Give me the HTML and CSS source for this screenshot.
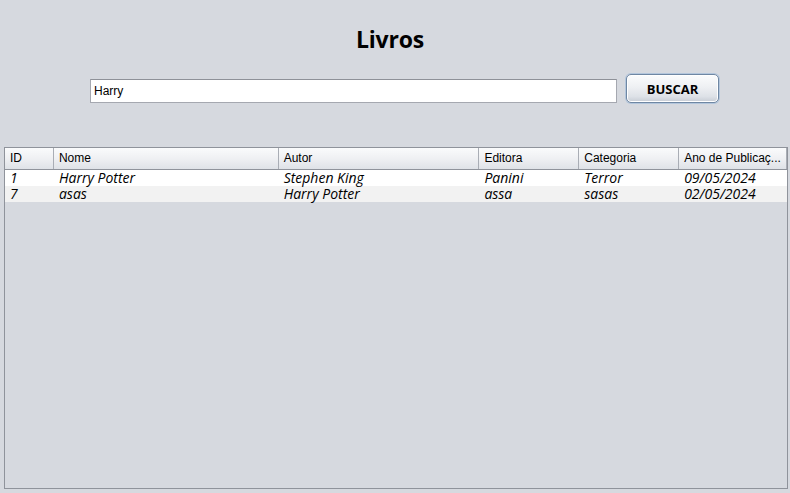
FILE: index.html
```html
<!DOCTYPE html>
<html lang="pt">
<head>
<meta charset="utf-8">
<title>Livros</title>
<link rel="stylesheet" href="styles.css">
</head>
<body>
<div class="app">
  <h1 class="title">Livros</h1>
  <div class="search">
    <input class="search-input" type="text" value="Harry">
    <button class="btn">BUSCAR</button>
  </div>
  <div class="table">
    <div class="row head">
      <div class="c c-id">ID</div>
      <div class="c c-nome">Nome</div>
      <div class="c c-autor">Autor</div>
      <div class="c c-ed">Editora</div>
      <div class="c c-cat">Categoria</div>
      <div class="c c-ano">Ano de Publicaç...</div>
    </div>
    <div class="row data">
      <div class="c c-id">1</div>
      <div class="c c-nome">Harry Potter</div>
      <div class="c c-autor">Stephen King</div>
      <div class="c c-ed">Panini</div>
      <div class="c c-cat">Terror</div>
      <div class="c c-ano">09/05/2024</div>
    </div>
    <div class="row data alt">
      <div class="c c-id">7</div>
      <div class="c c-nome">asas</div>
      <div class="c c-autor">Harry Potter</div>
      <div class="c c-ed">assa</div>
      <div class="c c-cat">sasas</div>
      <div class="c c-ano">02/05/2024</div>
    </div>
  </div>
</div>
</body>
</html>
```

FILE: styles.css
```css
* { box-sizing: border-box; }
html, body { margin: 0; padding: 0; }
body {
  width: 790px;
  height: 493px;
  background: #d6d9df;
  font-family: "Liberation Sans", Arial, sans-serif;
  overflow: hidden;
}
.app {
  display: flex;
  flex-direction: column;
  height: 493px;
  padding: 0 2px 4px 4px;
}
.title {
  margin: 24px 0 0 0;
  padding-right: 12px;
  height: 30px;
  line-height: 30px;
  text-align: center;
  font-family: "Open Sans", "Noto Sans", sans-serif;
  font-weight: 700;
  font-size: 23px;
  letter-spacing: -0.2px;
  color: #000;
}
.search {
  display: flex;
  align-items: flex-start;
  margin-top: 20px;
  padding-left: 86px;
  gap: 9px;
}
.search-input {
  width: 527px;
  height: 24px;
  margin: 5px 0 0 0;
  border: 1px solid #a5a8b0;
  border-top-color: #8e9198;
  background: #fff;
  font-family: "Liberation Sans", Arial, sans-serif;
  font-size: 12px;
  padding: 0 3px;
  color: #000;
  outline: none;
}
.btn {
  width: 93px;
  height: 29px;
  margin: 0;
  border: 1px solid #6f87a3;
  border-radius: 5px;
  background: linear-gradient(#fbfcfd 0%, #eef0f3 45%, #dde1e7 80%, #c6ccd5 100%);
  box-shadow: inset 0 0 0 1px #fff, 0 0 0 1px #b3c6dc;
  font-family: "Open Sans", "Noto Sans", sans-serif;
  font-weight: 700;
  font-size: 13px;
  color: #000;
  padding: 0;
}
.table {
  margin-top: 44px;
  flex: 1;
  border: 1px solid #8f939b;
  background: #d6d9df;
}
.row {
  display: flex;
}
.head {
  height: 22px;
  background: linear-gradient(#fafbfc 0%, #eff0f3 50%, #dfe2e7 100%);
  border-bottom: 1px solid #8f939b;
}
.head .c {
  border-right: 1px solid #a9adb5;
  font-family: "Liberation Sans", Arial, sans-serif;
  font-size: 12px;
  line-height: 21px;
  padding-left: 5px;
  color: #000;
  white-space: nowrap;
  overflow: hidden;
}
.data {
  height: 16px;
  background: #fff;
}
.data.alt { background: #f2f2f2; }
.data .c {
  font-family: "Open Sans", "Noto Sans", sans-serif;
  font-style: italic;
  font-size: 14px;
  line-height: 16px;
  padding-left: 5px;
  color: #000;
  white-space: nowrap;
}
.c-id { width: 49px; }
.c-nome { width: 225px; }
.c-autor { width: 201px; }
.c-ed { width: 100px; }
.c-cat { width: 100px; }
.c-ano { width: 108px; }
```
